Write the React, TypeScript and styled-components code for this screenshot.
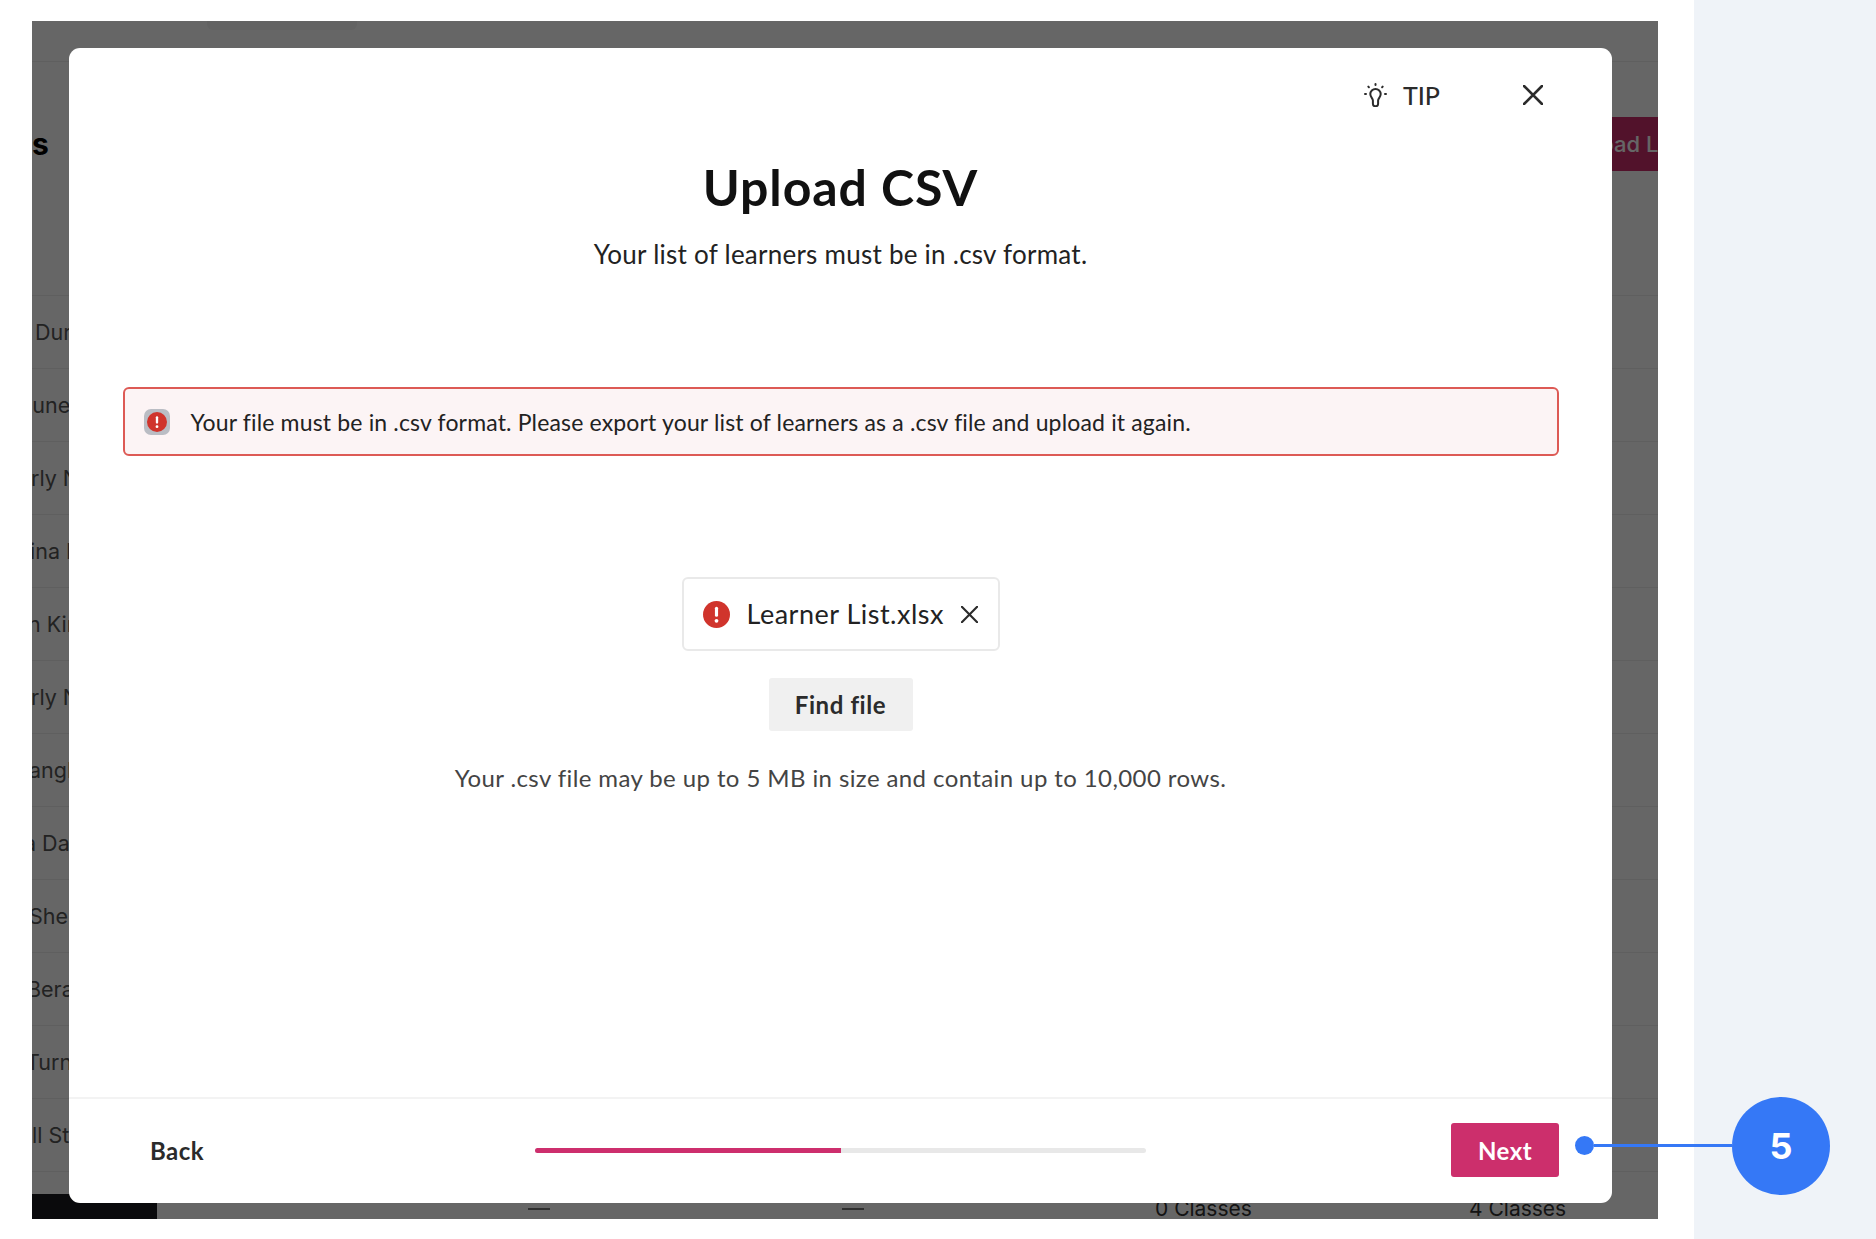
import React from 'react'
import styled, { createGlobalStyle } from 'styled-components'

const names = [
    { text: 'Durham', indent: 3 },
    { text: 'June Park', indent: -12 },
    { text: 'rly Nolan', indent: -1 },
    { text: 'ina Ivers', indent: -2 },
    { text: 'n Kim', indent: -4 },
    { text: 'rly Nolan', indent: -1 },
    { text: 'angley', indent: -3 },
    { text: 'a Davis', indent: -8 },
    { text: 'Shelby', indent: -3 },
    { text: 'Berard', indent: -5 },
    { text: 'Turner', indent: -6 },
    { text: 'll Stone', indent: 0 },
]

const AlertIcon = ({ size }: { size: number }) => (
    <svg width={size} height={size} viewBox="0 0 24 24">
        <circle cx="12" cy="12" r="12" fill="#d0342c" />
        <rect x="10.6" y="5" width="2.8" height="9" rx="1.4" fill="#fff" />
        <circle cx="12" cy="17.6" r="1.7" fill="#fff" />
    </svg>
)

const CloseIcon = ({ size, stroke }: { size: number; stroke: number }) => (
    <svg width={size} height={size} viewBox="0 0 20 20" fill="none" stroke="#2b2b2b" strokeWidth={stroke} strokeLinecap="round">
        <path d="M1 1 19 19M19 1 1 19" />
    </svg>
)

const BulbIcon = () => (
    <svg width="23" height="24" viewBox="0 0 23 24" fill="none" stroke="#2b2b2b" strokeWidth="2" strokeLinecap="round" strokeLinejoin="round">
        <path d="M8.9 17.5c0-2.2-2.6-3.3-2.6-6.4a5.2 5.2 0 0 1 10.4 0c0 3.1-2.6 4.2-2.6 6.4v3.2a2.6 2.6 0 0 1-5.2 0z" />
        <path d="M11.5 1v1M4.3 3.6l.6.6M18.7 3.6l-.6.6M1 11h1M21 11h1" />
    </svg>
)

const App = () => {
    return (
        <Page>
            <GlobalStyle />
            <Main>
                <Backdrop>
                    <TopBar>
                        <TopPill />
                    </TopBar>
                    <Heading>
                        <HeadingText>s</HeadingText>
                        <UploadButton>Upload List</UploadButton>
                    </Heading>
                    {names.map((name, i) => (
                        <Row key={i}>
                            <RowName $indent={name.indent}>{name.text}</RowName>
                        </Row>
                    ))}
                    <LastRow>
                        <Dash $left={496} />
                        <Dash $left={810} />
                        <ClassCount $left={1123}>0 Classes</ClassCount>
                        <ClassCount $left={1437}>4 Classes</ClassCount>
                    </LastRow>
                    <BlackBar />
                    <Dim />
                    <Modal>
                        <ModalTop>
                            <Tip>
                                <BulbIcon />
                                TIP
                            </Tip>
                            <CloseIcon size={20} stroke={2.6} />
                        </ModalTop>
                        <Title>Upload CSV</Title>
                        <Subtitle>Your list of learners must be in .csv format.</Subtitle>
                        <ErrorBox>
                            <ErrorIconWrap>
                                <AlertIcon size={20} />
                            </ErrorIconWrap>
                            Your file must be in .csv format. Please export your list of learners as a .csv file and upload it again.
                        </ErrorBox>
                        <FileChip>
                            <AlertIcon size={27} />
                            <FileName>Learner List.xlsx</FileName>
                            <CloseIcon size={17} stroke={2.5} />
                        </FileChip>
                        <FindFile>Find file</FindFile>
                        <Help>Your .csv file may be up to 5 MB in size and contain up to 10,000 rows.</Help>
                        <ModalFooter>
                            <BackButton>Back</BackButton>
                            <Progress>
                                <ProgressFill style={{ width: '50%' }} />
                            </Progress>
                            <NextButton>Next</NextButton>
                        </ModalFooter>
                    </Modal>
                </Backdrop>
            </Main>
            <Side />
            <Callout>
                <CalloutDot />
                <CalloutLine />
                <CalloutBadge>5</CalloutBadge>
            </Callout>
        </Page>
    )
}

export default App

const GlobalStyle = createGlobalStyle`
    html, body {
        margin: 0;
        padding: 0;
        background: #fff;
    }
`

const Page = styled.div`
    position: relative;
    display: grid;
    grid-template-columns: 1694px 182px;
    width: 1876px;
    height: 1239px;
    overflow: hidden;
    font-family: Lato, "Open Sans", sans-serif;
`

const Main = styled.div`
    background: #fff;
    padding: 21px 0 0 32px;
`

const Side = styled.div`
    background: #eff3f8;
`

const Backdrop = styled.div`
    position: relative;
    width: 1626px;
    height: 1198px;
    overflow: hidden;
    background: #fff;
    font-family: Inter, sans-serif;
`

const TopBar = styled.div`
    height: 40px;
    padding-left: 175px;
    border-bottom: 1px solid #eee;
`

const TopPill = styled.div`
    width: 150px;
    height: 9px;
    background: #f4f4f4;
    border-radius: 0 0 6px 6px;
`

const Heading = styled.div`
    display: flex;
    justify-content: space-between;
    align-items: flex-start;
    height: 234px;
    border-bottom: 1px solid #eee;
    padding-top: 55px;
    box-sizing: border-box;
`

const HeadingText = styled.div`
    font-size: 30px;
    line-height: 54px;
    font-weight: 700;
    color: #000;
`

const UploadButton = styled.div`
    width: 160px;
    height: 54px;
    margin-right: -1px;
    box-sizing: border-box;
    padding-left: 66px;
    white-space: nowrap;
    overflow: hidden;
    line-height: 54px;
    font-size: 22px;
    font-weight: 500;
    color: #fff;
    background: #cc2f6c;
`

const Row = styled.div`
    height: 73px;
    box-sizing: border-box;
    border-bottom: 1px solid #eee;
    display: flex;
    align-items: center;
    overflow: hidden;
`

const RowName = styled.div<{ $indent: number }>`
    margin-left: ${(p) => p.$indent}px;
    white-space: nowrap;
    font-size: 21.5px;
    color: #555;
`

const LastRow = styled.div`
    position: relative;
    height: 50px;
`

const Dash = styled.div<{ $left: number }>`
    position: absolute;
    left: ${(p) => p.$left}px;
    top: 36px;
    width: 22px;
    height: 2px;
    background: #777;
`

const ClassCount = styled.div<{ $left: number }>`
    position: absolute;
    left: ${(p) => p.$left}px;
    top: 24px;
    font-size: 21px;
    line-height: 26px;
    white-space: nowrap;
    color: #333;
`

const BlackBar = styled.div`
    position: absolute;
    left: 0;
    bottom: 0;
    width: 125px;
    height: 25px;
    background: #19191e;
`

const Dim = styled.div`
    position: absolute;
    inset: 0;
    background: rgba(0, 0, 0, 0.6);
`

const Modal = styled.div`
    position: absolute;
    left: 37px;
    top: 27px;
    width: 1543px;
    height: 1155px;
    display: flex;
    flex-direction: column;
    align-items: center;
    background: #fff;
    border-radius: 11px;
    font-family: Lato, "Open Sans", sans-serif;
    color: #222;
`

const ModalTop = styled.div`
    align-self: stretch;
    height: 94px;
    flex: none;
    display: flex;
    justify-content: flex-end;
    align-items: center;
    gap: 83px;
    padding-right: 69px;
`

const Tip = styled.div`
    display: flex;
    align-items: center;
    gap: 16px;
    font-size: 25px;
    font-weight: 500;
    color: #2b2b2b;
`

const Title = styled.h1`
    margin: 15px 0 0;
    font-size: 50px;
    letter-spacing: 0.9px;
    line-height: 60px;
    font-weight: 700;
    color: #111;
`

const Subtitle = styled.div`
    margin-top: 22px;
    font-size: 26px;
    letter-spacing: 0.25px;
    line-height: 30px;
    color: #222;
`

const ErrorBox = styled.div`
    margin-top: 118px;
    width: 1436px;
    height: 69px;
    box-sizing: border-box;
    display: flex;
    align-items: center;
    gap: 21px;
    padding-left: 19px;
    border: 2px solid #dd5a55;
    border-radius: 6px;
    background: #fcf4f5;
    font-size: 23px;
    letter-spacing: 0.16px;
    color: #222;
`

const ErrorIconWrap = styled.span`
    width: 26px;
    height: 26px;
    display: flex;
    align-items: center;
    justify-content: center;
    background: #babdc4;
    border-radius: 7px;
`

const FileChip = styled.div`
    margin-top: 121px;
    width: 318px;
    height: 74px;
    box-sizing: border-box;
    display: flex;
    align-items: center;
    padding-left: 19px;
    border: 2px solid #e9e9e9;
    border-radius: 6px;
`

const FileName = styled.span`
    margin: 0 17px 2px 17px;
    font-size: 27px;
    letter-spacing: 0.5px;
    white-space: nowrap;
    color: #222;
`

const FindFile = styled.div`
    margin-top: 27px;
    width: 144px;
    height: 53px;
    display: flex;
    align-items: center;
    justify-content: center;
    background: #f0f0f0;
    border-radius: 3px;
    font-size: 24px;
    letter-spacing: 0.6px;
    font-weight: 700;
    color: #2b2b2b;
`

const Help = styled.div`
    margin-top: 32px;
    font-size: 24px;
    letter-spacing: 0.4px;
    line-height: 30px;
    color: #444;
`

const ModalFooter = styled.div`
    align-self: stretch;
    margin-top: auto;
    height: 106px;
    box-sizing: border-box;
    border-top: 2px solid #f3f3f3;
    display: grid;
    grid-template-columns: 1fr 611px 1fr;
    align-items: center;
    padding: 0 53px 2px;
`

const BackButton = styled.div`
    margin-left: 28px;
    font-size: 24px;
    letter-spacing: 0.5px;
    font-weight: 700;
    color: #2b2b2b;
    padding-top: 1px;
`

const Progress = styled.div`
    height: 5px;
    background: #e8e8e8;
    border-radius: 3px;
    overflow: hidden;
`

const ProgressFill = styled.div`
    height: 100%;
    background: #cd2f6d;
`

const NextButton = styled.div`
    justify-self: end;
    width: 108px;
    height: 54px;
    display: flex;
    align-items: center;
    justify-content: center;
    background: #cc2f6c;
    border-radius: 3px;
    font-size: 24px;
    letter-spacing: 0.5px;
    font-weight: 700;
    color: #fff;
`

const Callout = styled.div`
    position: absolute;
    left: 1575px;
    top: 1097px;
    width: 255px;
    height: 98px;
    display: flex;
    align-items: center;
`

const CalloutDot = styled.div`
    width: 19px;
    height: 19px;
    flex: none;
    border-radius: 50%;
    background: #3578f6;
    margin-top: -2px;
`

const CalloutLine = styled.div`
    flex: 1;
    height: 3px;
    background: #3578f6;
    margin-top: -2px;
`

const CalloutBadge = styled.div`
    width: 98px;
    height: 98px;
    flex: none;
    display: flex;
    align-items: center;
    justify-content: center;
    border-radius: 50%;
    background: #3578f6;
    color: #fff;
    font-family: Inter, sans-serif;
    font-size: 36px;
    font-weight: 700;
`
